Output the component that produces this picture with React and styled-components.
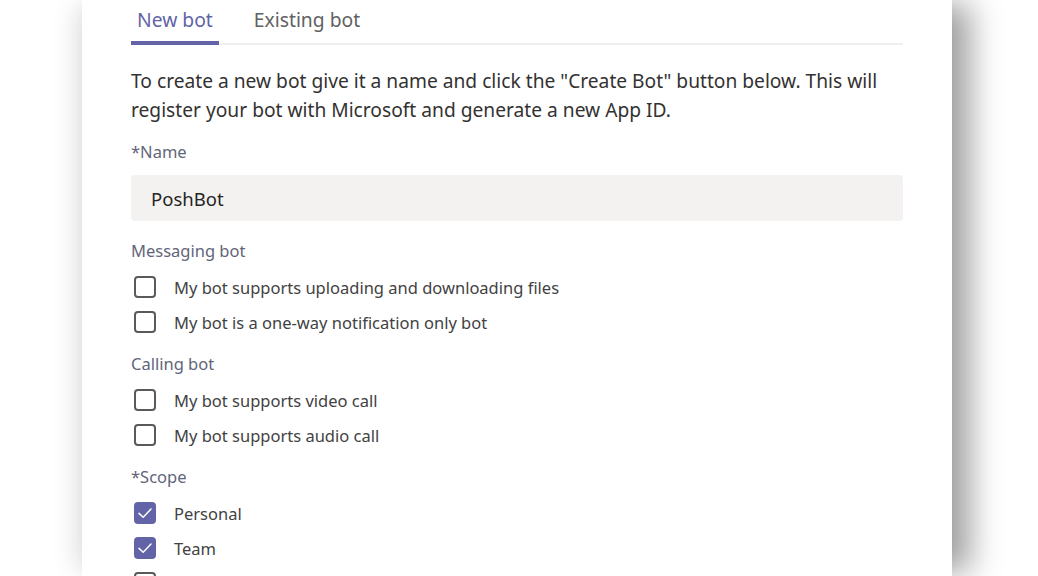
import React, { useState } from 'react'
import styled, { createGlobalStyle } from 'styled-components'

const GlobalStyle = createGlobalStyle`
  html, body {
    margin: 0;
    padding: 0;
    background: #ffffff;
    overflow: hidden;
  }
  body {
    font-family: 'Noto Sans', 'Open Sans', sans-serif;
    color: #252423;
  }
`

const Page = styled.div`
  height: 576px;
  padding-left: 82px;
`

const Panel = styled.div`
  width: 870px;
  height: 100%;
  box-sizing: border-box;
  padding: 0 49px;
  background: #ffffff;
  box-shadow: 22px 0 30px -4px rgba(0, 0, 0, 0.38), -12px 0 24px -6px rgba(0, 0, 0, 0.12);
`

const TabBar = styled.div`
  display: flex;
  gap: 29px;
  padding-top: 7px;
  border-bottom: 2px solid #f0efee;
`

const Tab = styled.button`
  border: none;
  background: transparent;
  font-family: inherit;
  font-size: 19.3px;
  line-height: 26px;
  padding: 0 6px 8px;
  margin-bottom: -2px;
  cursor: pointer;
  color: ${(p) => (p.active ? '#6264a7' : '#616161')};
  border-bottom: 4px solid ${(p) => (p.active ? '#6264a7' : 'transparent')};
`

const Intro = styled.p`
  margin: 21px 0 0;
  font-size: 19.2px;
  line-height: 29px;
  color: #333231;
`

const FieldLabel = styled.div`
  font-size: 16.5px;
  line-height: 22px;
  color: #626579;
  margin-top: ${(p) => p.top || 10}px;
`

const TextInput = styled.input`
  display: block;
  width: 100%;
  box-sizing: border-box;
  height: 46px;
  margin-top: 12px;
  padding: 0 20px;
  border: none;
  border-radius: 4px;
  background: #f3f2f1;
  font-family: inherit;
  font-size: 18.5px;
  color: #252423;
  outline: none;
`

const CheckList = styled.div`
  display: flex;
  flex-direction: column;
  gap: 13px;
  margin-top: ${(p) => p.top || 14}px;
`

const CheckRow = styled.label`
  display: flex;
  align-items: center;
  gap: 18px;
  height: 22px;
  padding-left: 3px;
  font-size: 16.5px;
  color: #424242;
  cursor: pointer;
`

const Box = styled.span`
  width: 22px;
  height: 22px;
  box-sizing: border-box;
  border-radius: 4px;
  flex-shrink: 0;
  display: flex;
  align-items: center;
  justify-content: center;
  border: ${(p) => (p.checked ? 'none' : '2px solid #5c5a58')};
  background: ${(p) => (p.checked ? '#6264a7' : '#ffffff')};
`

const Check = ({ label, initial }) => {
  const [on, setOn] = useState(!!initial)
  return (
    <CheckRow onClick={() => setOn(!on)}>
      <Box checked={on}>
        {on && (
          <svg width="22" height="22" viewBox="0 0 22 22">
            <path d="M5 11.4 L9.2 15.2 L17 7" fill="none" stroke="#ffffff" strokeWidth="1.5" strokeLinecap="round" strokeLinejoin="round" />
          </svg>
        )}
      </Box>
      {label}
    </CheckRow>
  )
}

export default function App() {
  const [tab, setTab] = useState('new')
  return (
    <Page>
      <GlobalStyle />
      <Panel>
        <TabBar>
          <Tab active={tab === 'new'} onClick={() => setTab('new')}>New bot</Tab>
          <Tab active={tab === 'existing'} onClick={() => setTab('existing')}>Existing bot</Tab>
        </TabBar>
        <Intro>
          To create a new bot give it a name and click the "Create Bot" button below. This will register your bot with Microsoft and generate a new App ID.
        </Intro>
        <FieldLabel top={17}>*Name</FieldLabel>
        <TextInput defaultValue="PoshBot" />
        <FieldLabel top={19}>Messaging bot</FieldLabel>
        <CheckList>
          <Check label="My bot supports uploading and downloading files" />
          <Check label="My bot is a one-way notification only bot" />
        </CheckList>
        <FieldLabel top={20}>Calling bot</FieldLabel>
        <CheckList>
          <Check label="My bot supports video call" />
          <Check label="My bot supports audio call" />
        </CheckList>
        <FieldLabel top={20}>*Scope</FieldLabel>
        <CheckList>
          <Check label="Personal" initial />
          <Check label="Team" initial />
          <Check label="Group Chat" />
        </CheckList>
      </Panel>
    </Page>
  )
}
